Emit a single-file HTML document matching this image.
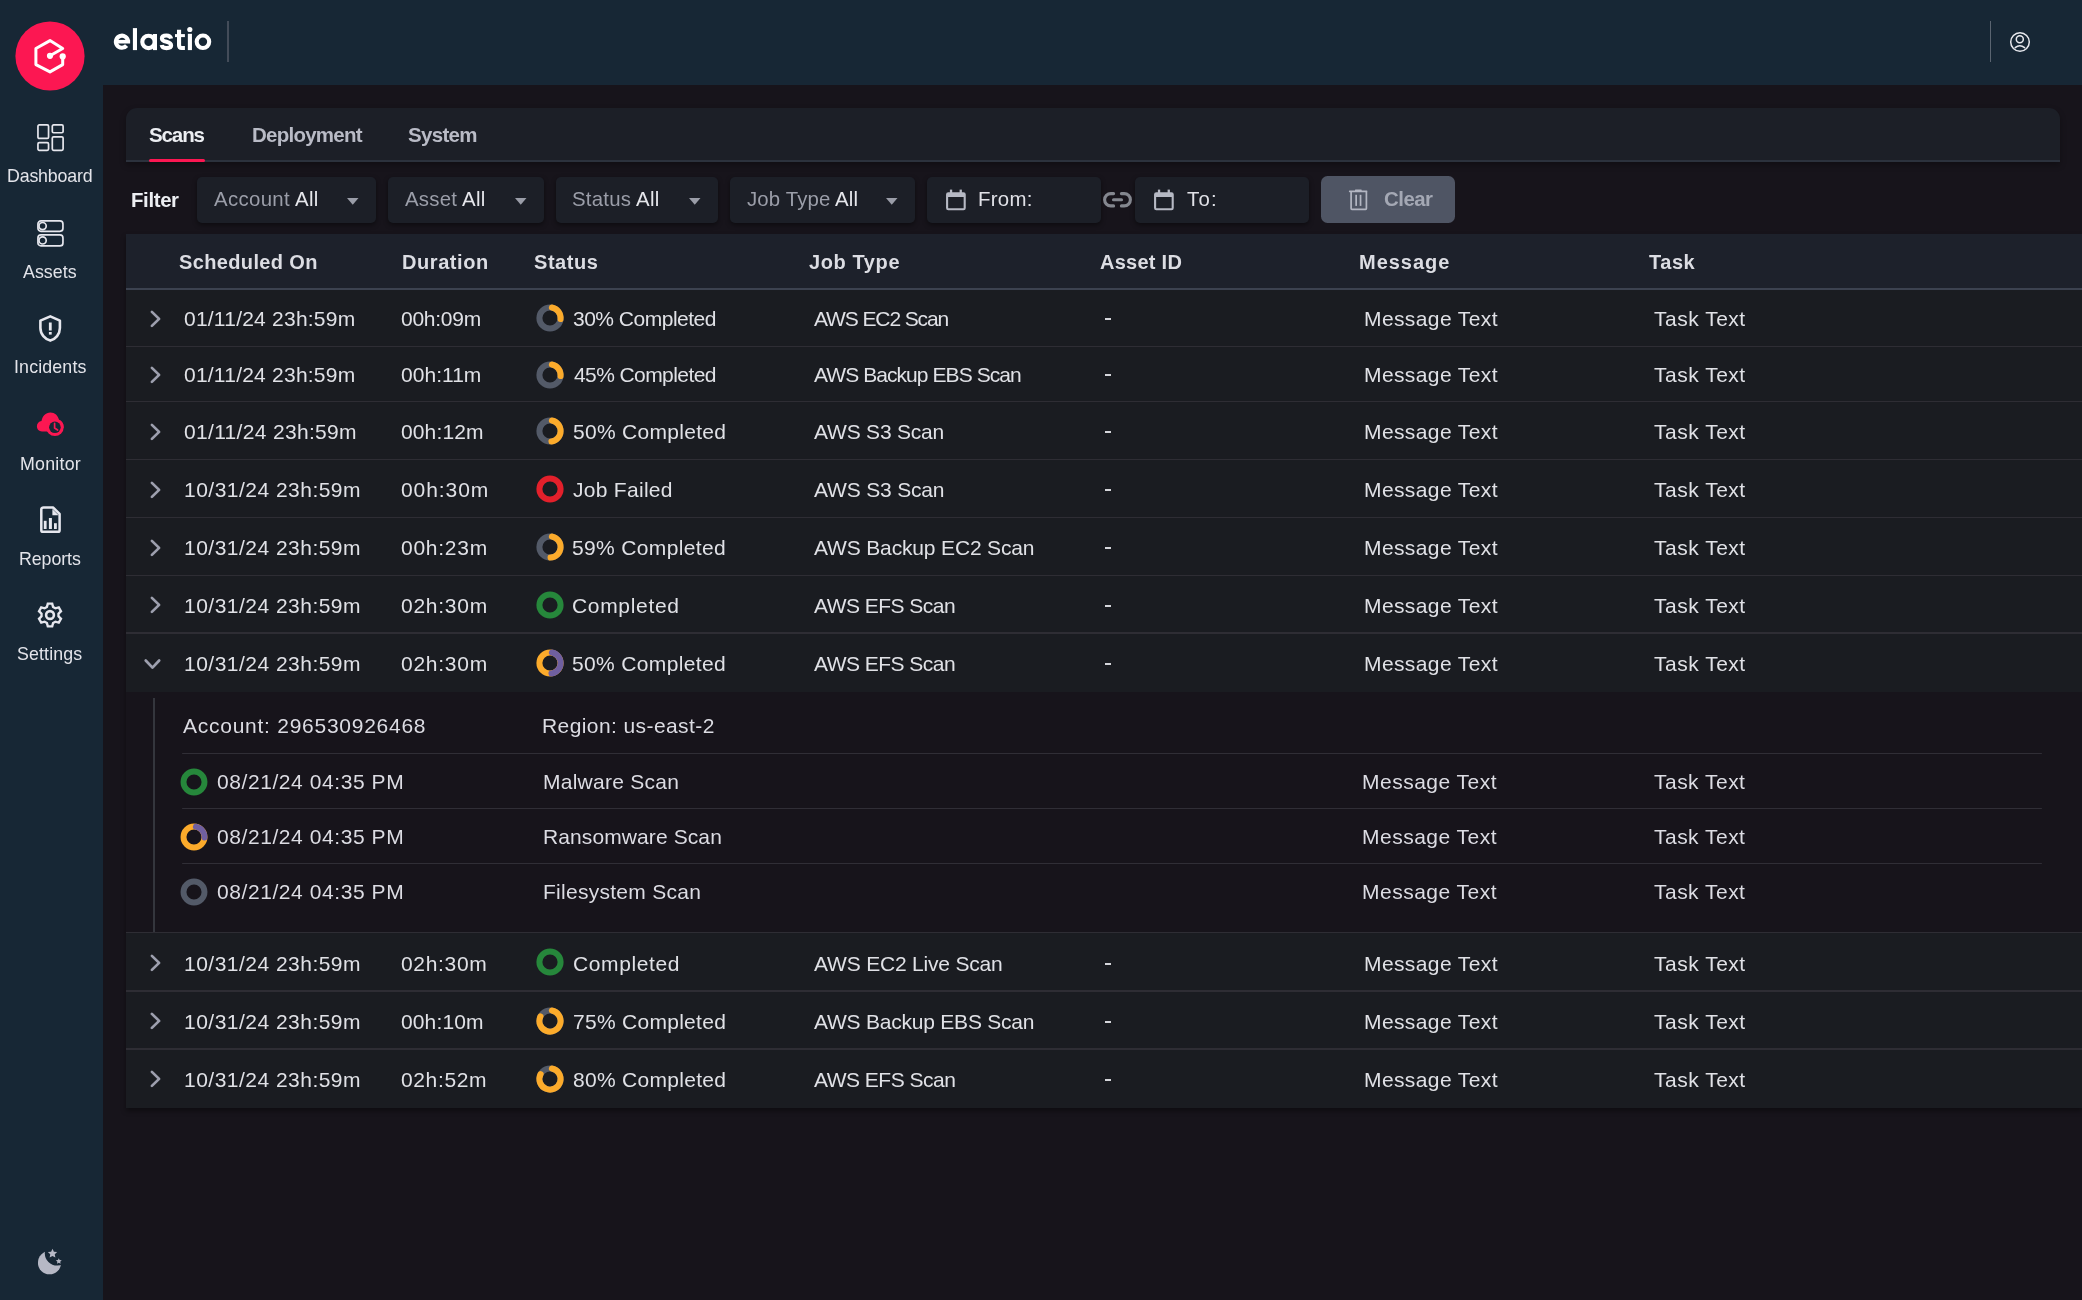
<!DOCTYPE html><html><head><meta charset="utf-8"><style>
*{box-sizing:border-box;margin:0;padding:0}
html,body{width:2082px;height:1300px;overflow:hidden;background:#17141b;font-family:"Liberation Sans",sans-serif}
.t{position:absolute;white-space:nowrap;will-change:transform}
.r{position:absolute}
svg{position:absolute;overflow:visible}
</style></head><body><div class="r" style="left:0px;top:0px;width:2082px;height:85px;background:#172735;"></div>
<div class="r" style="left:0px;top:0px;width:103px;height:1300px;background:#172735;"></div>
<svg style="left:15px;top:21px" width="70" height="70" viewBox="0 0 70 70"><circle cx="35" cy="35" r="34.6" fill="#fc1752"/><path d="M47.7 35.5 V43.6 L35 50.9 L20.9 43.6 V27.5 L35 19.6 L47.7 27.5 L35 34.7" fill="none" stroke="#fff" stroke-width="3" stroke-linejoin="round" stroke-linecap="round"/><circle cx="35" cy="34.8" r="3.1" fill="#fff"/><circle cx="47.7" cy="35.4" r="3.1" fill="#fff"/></svg>
<svg style="left:0;top:0" width="230" height="60" viewBox="0 0 230 60"><g fill="none" stroke="#fff" stroke-width="4.1"><path d="M128.0 41.7 A6.05 6.05 0 1 0 126.6 45.6"/><circle cx="148.5" cy="41.9" r="6.2"/><circle cx="202.95" cy="41.8" r="6.25"/><path d="M171.1 38.6 C170.6 36.4 168.8 35.5 166.5 35.5 C164 35.5 161.9 36.5 161.9 38.5 C161.9 40.7 164.3 41.3 166.6 41.8 C169.2 42.4 171.1 43.2 171.1 45.6 C171.1 47.5 169.1 48.1 166.5 48.1 C163.9 48.1 162 47.1 161.7 45.0"/><path d="M179.05 29.8 V45.3 Q179.05 48.05 181.8 48.05 H184.9"/></g><g fill="#fff"><rect x="117.5" y="39.9" width="12.6" height="3.6"/><rect x="132.9" y="28.1" width="4.1" height="22"/><rect x="152.9" y="34" width="4.1" height="16.1"/><rect x="175" y="34.1" width="9.9" height="3"/><rect x="187.85" y="33.8" width="4.1" height="16.3"/><circle cx="189.8" cy="29.5" r="2.6"/></g></svg>
<div class="r" style="left:227px;top:21.2px;width:2px;height:40.5px;background:#434c59;"></div>
<div class="r" style="left:1989.5px;top:21px;width:1.6px;height:41px;background:#5a6470;"></div>
<svg style="left:2008px;top:29.75px" width="24" height="24" viewBox="0 0 24 24" fill="none" stroke="#e8e9ee" stroke-width="1.5"><circle cx="12" cy="12" r="9.3"/><circle cx="11.8" cy="9.3" r="3.5"/><path d="M7.2 17.6 Q11.8 13.8 16.6 17.6" stroke-linecap="round"/></svg>
<div id="t0" class="t" style="left:7.00px;top:168.23px;font-size:17.8px;line-height:17.8px;font-weight:normal;color:#e3e4ea;letter-spacing:-0.175px;">Dashboard</div>
<div id="t1" class="t" style="left:23.00px;top:263.83px;font-size:17.8px;line-height:17.8px;font-weight:normal;color:#e3e4ea;letter-spacing:0.040px;">Assets</div>
<div id="t2" class="t" style="left:14.00px;top:359.43px;font-size:17.8px;line-height:17.8px;font-weight:normal;color:#e3e4ea;letter-spacing:0.150px;">Incidents</div>
<div id="t3" class="t" style="left:19.50px;top:455.93px;font-size:17.8px;line-height:17.8px;font-weight:normal;color:#e3e4ea;letter-spacing:0.233px;">Monitor</div>
<div id="t4" class="t" style="left:19.00px;top:550.93px;font-size:17.8px;line-height:17.8px;font-weight:normal;color:#e3e4ea;letter-spacing:-0.067px;">Reports</div>
<div id="t5" class="t" style="left:17.00px;top:646.23px;font-size:17.8px;line-height:17.8px;font-weight:normal;color:#e3e4ea;letter-spacing:0.143px;">Settings</div>
<svg style="left:37px;top:123.5px" width="27" height="27" viewBox="0 0 27 27" fill="none" stroke="#e6e7ee" stroke-width="1.7"><rect x="0.95" y="0.95" width="10.6" height="13.5" rx="1.3"/><rect x="15.3" y="0.95" width="10.8" height="7.8" rx="1.3"/><rect x="0.95" y="18.7" width="10.6" height="7.6" rx="1.3"/><rect x="15.3" y="12.8" width="10.8" height="13.5" rx="1.3"/></svg>
<svg style="left:37px;top:219.5px" width="27" height="27" viewBox="0 0 27 27" fill="none" stroke="#e6e7ee" stroke-width="1.7"><rect x="0.95" y="0.95" width="25" height="10.4" rx="3"/><rect x="0.95" y="14.9" width="25" height="11" rx="3"/><circle cx="5.6" cy="6.1" r="3.6"/><circle cx="5.6" cy="20.4" r="3.6"/></svg>
<svg style="left:39px;top:315px" width="23" height="27" viewBox="0 0 23 27"><path d="M11.3 1.4 L20.9 5.6 V13 C20.9 19.3 16.6 24 11.3 25.6 C6 24 1.4 19.3 1.4 13 V5.6 Z" fill="none" stroke="#e6e7ee" stroke-width="2.6" stroke-linejoin="round"/><rect x="9.9" y="7.5" width="2.8" height="8" fill="#e6e7ee"/><rect x="9.9" y="17" width="2.8" height="2.6" fill="#e6e7ee"/></svg>
<svg style="left:36px;top:411px" width="30" height="27" viewBox="0 0 30 27"><path d="M6 20.5 C3 20.5 0.9 18.2 0.9 15.3 C0.9 12.6 2.9 10.4 5.5 10.1 C6.2 5.2 9.6 1.4 14.4 1.4 C18.8 1.4 22.2 4.6 22.9 8.8 C25.6 9.6 27.6 12.2 27.6 15.2 C27.6 18.6 25 20.5 22 20.5 Z" fill="#fc1752"/><circle cx="18.9" cy="16.3" r="8.8" fill="#fc1752"/><circle cx="18.9" cy="16.3" r="5.8" fill="#172735"/><path d="M18.6 12.3 V17 L21.6 19" fill="none" stroke="#fc1752" stroke-width="1.7" stroke-linecap="round" stroke-linejoin="round"/></svg>
<svg style="left:40px;top:506px" width="22" height="28" viewBox="0 0 22 28"><path d="M3.6 1.5 H13 L19.6 7.8 V24.2 Q19.6 25.8 18 25.8 H3 Q1.3 25.8 1.3 24.2 V3.3 Q1.3 1.5 3.6 1.5 Z" fill="none" stroke="#e6e7ee" stroke-width="2.5" stroke-linejoin="round"/><path d="M12.4 3 V9.3 H18.6 Z" fill="#e6e7ee"/><rect x="3.8" y="14.8" width="2.8" height="8.2" fill="#e6e7ee"/><rect x="8.9" y="12" width="3" height="11" fill="#e6e7ee"/><rect x="14" y="17.2" width="2.8" height="5.8" fill="#e6e7ee"/></svg>
<svg style="left:37.3px;top:602.2px" width="26" height="26" viewBox="0 0 26 26"><path d="M9.90 4.98 L10.81 1.61 L15.19 1.61 L16.10 4.98 L18.40 6.30 L21.77 5.41 L23.96 9.20 L21.50 11.67 L21.50 14.33 L23.96 16.80 L21.77 20.59 L18.40 19.70 L16.10 21.02 L15.19 24.39 L10.81 24.39 L9.90 21.02 L7.60 19.70 L4.23 20.59 L2.04 16.80 L4.50 14.33 L4.50 11.67 L2.04 9.20 L4.23 5.41 L7.60 6.30 Z" fill="none" stroke="#e6e7ee" stroke-width="2.4" stroke-linejoin="miter"/><circle cx="13" cy="13" r="3.9" fill="none" stroke="#e6e7ee" stroke-width="2.6"/></svg>
<svg style="left:38px;top:1248px" width="26" height="28" viewBox="0 0 26 28"><defs><mask id="mm"><rect x="0" y="0" width="26" height="28" fill="#fff"/><circle cx="19.2" cy="5.2" r="12.4" fill="#000"/></mask></defs><circle cx="11.5" cy="14.7" r="11.6" fill="#b6b8c5" mask="url(#mm)"/><path d="M14.50 0.70 L15.88 3.70 L19.16 4.09 L16.74 6.33 L17.38 9.56 L14.50 7.95 L11.62 9.56 L12.26 6.33 L9.84 4.09 L13.12 3.70 Z" fill="#b6b8c5"/><path d="M20.80 10.20 L21.67 12.10 L23.75 12.34 L22.22 13.76 L22.62 15.81 L20.80 14.79 L18.98 15.81 L19.38 13.76 L17.85 12.34 L19.93 12.10 Z" fill="#b6b8c5"/></svg>
<div class="r" style="left:126px;top:108px;width:1934px;height:54px;background:#1c1f27;border-radius:11px 11px 0 0;box-shadow:0 3px 6px rgba(0,0,0,.3)"></div>
<div class="r" style="left:126px;top:160.2px;width:1934px;height:1.9px;background:#2c323d;"></div>
<div id="t6" class="t" style="left:149.00px;top:124.55px;font-size:20.5px;line-height:20.5px;font-weight:bold;color:#eceef2;letter-spacing:-1.100px;">Scans</div>
<div id="t7" class="t" style="left:251.50px;top:124.55px;font-size:20.5px;line-height:20.5px;font-weight:bold;color:#b9bbc6;letter-spacing:-0.756px;">Deployment</div>
<div id="t8" class="t" style="left:408.00px;top:124.55px;font-size:20.5px;line-height:20.5px;font-weight:bold;color:#b9bbc6;letter-spacing:-0.680px;">System</div>
<div class="r" style="left:148.8px;top:158.8px;width:56.4px;height:3.2px;background:#fc1752;border-radius:2px"></div>
<div id="t9" class="t" style="left:131.00px;top:189.53px;font-size:20.4px;line-height:20.4px;font-weight:bold;color:#eceef2;letter-spacing:-0.360px;">Filter</div>
<div class="r" style="left:197px;top:176.5px;width:179px;height:46px;background:#1c1f27;border-radius:5px;box-shadow:0 2px 5px rgba(0,0,0,.45)"></div>
<div id="t10" class="t" style="left:213.50px;top:188.73px;font-size:20.4px;line-height:20.4px;font-weight:normal;color:#9b9ea9;letter-spacing:0.340px;">Account <span style="color:#e6e7ec">All</span></div>
<svg style="left:347px;top:197.6px" width="12" height="7" viewBox="0 0 12 7"><path d="M0 0 H11.5 L5.75 6.8 Z" fill="#9a9da8"/></svg>
<div class="r" style="left:388px;top:176.5px;width:156px;height:46px;background:#1c1f27;border-radius:5px;box-shadow:0 2px 5px rgba(0,0,0,.45)"></div>
<div id="t11" class="t" style="left:405.00px;top:188.73px;font-size:20.4px;line-height:20.4px;font-weight:normal;color:#9b9ea9;letter-spacing:0.250px;">Asset <span style="color:#e6e7ec">All</span></div>
<svg style="left:515px;top:197.6px" width="12" height="7" viewBox="0 0 12 7"><path d="M0 0 H11.5 L5.75 6.8 Z" fill="#9a9da8"/></svg>
<div class="r" style="left:556px;top:176.5px;width:162px;height:46px;background:#1c1f27;border-radius:5px;box-shadow:0 2px 5px rgba(0,0,0,.45)"></div>
<div id="t12" class="t" style="left:571.50px;top:188.73px;font-size:20.4px;line-height:20.4px;font-weight:normal;color:#9b9ea9;letter-spacing:0.244px;">Status <span style="color:#e6e7ec">All</span></div>
<svg style="left:689.3px;top:197.6px" width="12" height="7" viewBox="0 0 12 7"><path d="M0 0 H11.5 L5.75 6.8 Z" fill="#9a9da8"/></svg>
<div class="r" style="left:730px;top:176.5px;width:185px;height:46px;background:#1c1f27;border-radius:5px;box-shadow:0 2px 5px rgba(0,0,0,.45)"></div>
<div id="t13" class="t" style="left:746.50px;top:188.73px;font-size:20.4px;line-height:20.4px;font-weight:normal;color:#9b9ea9;letter-spacing:0.127px;">Job Type <span style="color:#e6e7ec">All</span></div>
<svg style="left:886.4px;top:197.6px" width="12" height="7" viewBox="0 0 12 7"><path d="M0 0 H11.5 L5.75 6.8 Z" fill="#9a9da8"/></svg>
<div class="r" style="left:927px;top:176.5px;width:174px;height:46px;background:#1c1f27;border-radius:5px;box-shadow:0 2px 5px rgba(0,0,0,.45)"></div>
<svg style="left:946px;top:188.8px" width="20" height="22" viewBox="0 0 20 22"><rect x="1.1" y="4.4" width="17.6" height="15.9" rx="1.2" fill="none" stroke="#b6b9c4" stroke-width="2.1"/><rect x="1.1" y="4.4" width="17.6" height="3.6" fill="#b6b9c4"/><rect x="3.9" y="0.6" width="2.3" height="4" fill="#b6b9c4"/><rect x="13.6" y="0.6" width="2.3" height="4" fill="#b6b9c4"/></svg>
<div id="t14" class="t" style="left:977.50px;top:188.73px;font-size:20.4px;line-height:20.4px;font-weight:normal;color:#e0e1e7;letter-spacing:0.300px;">From:</div>
<div class="r" style="left:1135px;top:176.5px;width:174px;height:46px;background:#1c1f27;border-radius:5px;box-shadow:0 2px 5px rgba(0,0,0,.45)"></div>
<svg style="left:1154.2px;top:188.8px" width="20" height="22" viewBox="0 0 20 22"><rect x="1.1" y="4.4" width="17.6" height="15.9" rx="1.2" fill="none" stroke="#b6b9c4" stroke-width="2.1"/><rect x="1.1" y="4.4" width="17.6" height="3.6" fill="#b6b9c4"/><rect x="3.9" y="0.6" width="2.3" height="4" fill="#b6b9c4"/><rect x="13.6" y="0.6" width="2.3" height="4" fill="#b6b9c4"/></svg>
<div id="t15" class="t" style="left:1187.00px;top:188.73px;font-size:20.4px;line-height:20.4px;font-weight:normal;color:#e0e1e7;letter-spacing:1.200px;">To:</div>
<svg style="left:1103px;top:192px" width="30" height="16" viewBox="0 0 30 16" fill="none" stroke="#84878f" stroke-width="3.1" stroke-linecap="round"><path d="M10.6 1.6 H7.75 A6.15 6.15 0 0 0 7.75 13.9 H10.6"/><path d="M18.4 1.6 H21.25 A6.15 6.15 0 0 1 21.25 13.9 H18.4"/><path d="M10.5 7.75 H18.5"/></svg>
<div class="r" style="left:1321px;top:176px;width:134.3px;height:46.7px;background:#4f5564;border-radius:6.5px"></div>
<svg style="left:1348px;top:188px" width="22" height="24" viewBox="0 0 22 24"><g fill="#b3b6c2"><rect x="7" y="1.4" width="6.7" height="1.8" rx="0.5"/><rect x="0.9" y="2.6" width="18.5" height="1.6" rx="0.6"/><rect x="7.3" y="6.8" width="1.7" height="11.1"/><rect x="11.7" y="6.8" width="1.7" height="11.1"/></g><path d="M3.1 4 V20.6 Q3.1 21.3 3.9 21.3 H17.6 Q18.4 21.3 18.4 20.6 V4" fill="none" stroke="#b3b6c2" stroke-width="1.7"/></svg>
<div id="t16" class="t" style="left:1383.50px;top:188.73px;font-size:20.4px;line-height:20.4px;font-weight:bold;color:#a4a8b4;letter-spacing:-0.500px;">Clear</div>
<div class="r" style="left:126px;top:234px;width:1956px;height:874px;background:#1a1c21;box-shadow:0 3px 5px rgba(0,0,0,.4)"></div>
<div class="r" style="left:126px;top:234px;width:1956px;height:54.6px;background:#1d212b;"></div>
<div class="r" style="left:126px;top:287.6px;width:1956px;height:2px;background:#3c4250;"></div>
<div id="t17" class="t" style="left:178.50px;top:251.87px;font-size:20px;line-height:20px;font-weight:bold;color:#dcdde3;letter-spacing:0.364px;">Scheduled On</div>
<div id="t18" class="t" style="left:402.00px;top:251.87px;font-size:20px;line-height:20px;font-weight:bold;color:#dcdde3;letter-spacing:0.571px;">Duration</div>
<div id="t19" class="t" style="left:533.50px;top:251.87px;font-size:20px;line-height:20px;font-weight:bold;color:#dcdde3;letter-spacing:0.560px;">Status</div>
<div id="t20" class="t" style="left:809.00px;top:251.87px;font-size:20px;line-height:20px;font-weight:bold;color:#dcdde3;letter-spacing:0.600px;">Job Type</div>
<div id="t21" class="t" style="left:1099.50px;top:251.87px;font-size:20px;line-height:20px;font-weight:bold;color:#dcdde3;letter-spacing:0.257px;">Asset ID</div>
<div id="t22" class="t" style="left:1359.00px;top:251.87px;font-size:20px;line-height:20px;font-weight:bold;color:#dcdde3;letter-spacing:0.967px;">Message</div>
<div id="t23" class="t" style="left:1649.00px;top:251.87px;font-size:20px;line-height:20px;font-weight:bold;color:#dcdde3;letter-spacing:0.533px;">Task</div>
<div class="r" style="left:126px;top:345.8px;width:1956px;height:1.7px;background:#2e2d34;"></div>
<svg style="left:148px;top:308.65px" width="14" height="20" viewBox="0 0 14 20"><path d="M3.9 2.9 L11.1 9.9 L3.9 16.9" fill="none" stroke="#9d9fae" stroke-width="2.7" stroke-linecap="round" stroke-linejoin="round"/></svg>
<div id="t24" class="t" style="left:184.00px;top:307.92px;font-size:21px;line-height:21px;font-weight:normal;color:#e0e1e6;letter-spacing:0.227px;">01/11/24 23h:59m</div>
<div id="t25" class="t" style="left:401.00px;top:307.92px;font-size:21px;line-height:21px;font-weight:normal;color:#e0e1e6;letter-spacing:-0.267px;">00h:09m</div>
<svg style="left:535.30px;top:303.35px" width="30" height="30" viewBox="0 0 30 30"><circle cx="15" cy="15" r="10.6" fill="none" stroke="#535a68" stroke-width="6.0"/><path d="M16.841 4.561 A10.6 10.6 0 0 1 25.542 16.108" fill="none" stroke="#fcab2b" stroke-width="6.0" stroke-linecap="round"/></svg>
<div id="t26" class="t" style="left:572.50px;top:307.92px;font-size:21px;line-height:21px;font-weight:normal;color:#e0e1e6;letter-spacing:-0.500px;">30% Completed</div>
<div id="t27" class="t" style="left:813.50px;top:307.92px;font-size:21px;line-height:21px;font-weight:normal;color:#e0e1e6;letter-spacing:-1.109px;">AWS EC2 Scan</div>
<div class="r" style="left:1104.8px;top:317.9px;width:6.5px;height:2.1px;background:#d5d6db;"></div>
<div id="t28" class="t" style="left:1364.00px;top:307.92px;font-size:21px;line-height:21px;font-weight:normal;color:#e0e1e6;letter-spacing:0.400px;">Message Text</div>
<div id="t29" class="t" style="left:1654.00px;top:307.92px;font-size:21px;line-height:21px;font-weight:normal;color:#e0e1e6;letter-spacing:0.500px;">Task Text</div>
<div class="r" style="left:126px;top:400.6px;width:1956px;height:1.7px;background:#2e2d34;"></div>
<svg style="left:148px;top:365.1px" width="14" height="20" viewBox="0 0 14 20"><path d="M3.9 2.9 L11.1 9.9 L3.9 16.9" fill="none" stroke="#9d9fae" stroke-width="2.7" stroke-linecap="round" stroke-linejoin="round"/></svg>
<div id="t30" class="t" style="left:184.00px;top:364.02px;font-size:21px;line-height:21px;font-weight:normal;color:#e0e1e6;letter-spacing:0.227px;">01/11/24 23h:59m</div>
<div id="t31" class="t" style="left:401.00px;top:364.02px;font-size:21px;line-height:21px;font-weight:normal;color:#e0e1e6;letter-spacing:0.033px;">00h:11m</div>
<svg style="left:535.30px;top:359.80px" width="30" height="30" viewBox="0 0 30 30"><circle cx="15" cy="15" r="10.6" fill="none" stroke="#535a68" stroke-width="6.0"/><path d="M16.841 4.561 A10.6 10.6 0 0 1 25.542 16.108" fill="none" stroke="#fcab2b" stroke-width="6.0" stroke-linecap="round"/></svg>
<div id="t32" class="t" style="left:573.50px;top:364.02px;font-size:21px;line-height:21px;font-weight:normal;color:#e0e1e6;letter-spacing:-0.583px;">45% Completed</div>
<div id="t33" class="t" style="left:814.00px;top:364.02px;font-size:21px;line-height:21px;font-weight:normal;color:#e0e1e6;letter-spacing:-0.933px;">AWS Backup EBS Scan</div>
<div class="r" style="left:1104.8px;top:374.0px;width:6.5px;height:2.1px;background:#d5d6db;"></div>
<div id="t34" class="t" style="left:1364.00px;top:364.02px;font-size:21px;line-height:21px;font-weight:normal;color:#e0e1e6;letter-spacing:0.400px;">Message Text</div>
<div id="t35" class="t" style="left:1654.00px;top:364.02px;font-size:21px;line-height:21px;font-weight:normal;color:#e0e1e6;letter-spacing:0.500px;">Task Text</div>
<div class="r" style="left:126px;top:458.6px;width:1956px;height:1.7px;background:#2e2d34;"></div>
<svg style="left:148px;top:421.5px" width="14" height="20" viewBox="0 0 14 20"><path d="M3.9 2.9 L11.1 9.9 L3.9 16.9" fill="none" stroke="#9d9fae" stroke-width="2.7" stroke-linecap="round" stroke-linejoin="round"/></svg>
<div id="t36" class="t" style="left:184.00px;top:420.82px;font-size:21px;line-height:21px;font-weight:normal;color:#e0e1e6;letter-spacing:0.320px;">01/11/24 23h:59m</div>
<div id="t37" class="t" style="left:401.00px;top:420.82px;font-size:21px;line-height:21px;font-weight:normal;color:#e0e1e6;letter-spacing:0.133px;">00h:12m</div>
<svg style="left:535.30px;top:416.20px" width="30" height="30" viewBox="0 0 30 30"><circle cx="15" cy="15" r="10.6" fill="none" stroke="#535a68" stroke-width="6.0"/><path d="M16.841 4.561 A10.6 10.6 0 0 1 16.475 25.497" fill="none" stroke="#fcab2b" stroke-width="6.0" stroke-linecap="round"/></svg>
<div id="t38" class="t" style="left:573.00px;top:420.82px;font-size:21px;line-height:21px;font-weight:normal;color:#e0e1e6;letter-spacing:0.300px;">50% Completed</div>
<div id="t39" class="t" style="left:813.50px;top:420.82px;font-size:21px;line-height:21px;font-weight:normal;color:#e0e1e6;letter-spacing:-0.200px;">AWS S3 Scan</div>
<div class="r" style="left:1104.8px;top:430.8px;width:6.5px;height:2.1px;background:#d5d6db;"></div>
<div id="t40" class="t" style="left:1364.00px;top:420.82px;font-size:21px;line-height:21px;font-weight:normal;color:#e0e1e6;letter-spacing:0.400px;">Message Text</div>
<div id="t41" class="t" style="left:1654.00px;top:420.82px;font-size:21px;line-height:21px;font-weight:normal;color:#e0e1e6;letter-spacing:0.500px;">Task Text</div>
<div class="r" style="left:126px;top:516.8px;width:1956px;height:1.7px;background:#2e2d34;"></div>
<svg style="left:148px;top:479.6px" width="14" height="20" viewBox="0 0 14 20"><path d="M3.9 2.9 L11.1 9.9 L3.9 16.9" fill="none" stroke="#9d9fae" stroke-width="2.7" stroke-linecap="round" stroke-linejoin="round"/></svg>
<div id="t42" class="t" style="left:183.50px;top:478.92px;font-size:21px;line-height:21px;font-weight:normal;color:#e0e1e6;letter-spacing:0.480px;">10/31/24 23h:59m</div>
<div id="t43" class="t" style="left:400.50px;top:478.92px;font-size:21px;line-height:21px;font-weight:normal;color:#e0e1e6;letter-spacing:0.933px;">00h:30m</div>
<svg style="left:535.30px;top:474.30px" width="30" height="30" viewBox="0 0 30 30"><circle cx="15" cy="15" r="10.6" fill="none" stroke="#e3202b" stroke-width="6.0"/></svg>
<div id="t44" class="t" style="left:573.00px;top:478.92px;font-size:21px;line-height:21px;font-weight:normal;color:#e0e1e6;letter-spacing:0.289px;">Job Failed</div>
<div id="t45" class="t" style="left:814.00px;top:478.92px;font-size:21px;line-height:21px;font-weight:normal;color:#e0e1e6;letter-spacing:-0.180px;">AWS S3 Scan</div>
<div class="r" style="left:1104.8px;top:488.9px;width:6.5px;height:2.1px;background:#d5d6db;"></div>
<div id="t46" class="t" style="left:1364.00px;top:478.92px;font-size:21px;line-height:21px;font-weight:normal;color:#e0e1e6;letter-spacing:0.400px;">Message Text</div>
<div id="t47" class="t" style="left:1654.00px;top:478.92px;font-size:21px;line-height:21px;font-weight:normal;color:#e0e1e6;letter-spacing:0.500px;">Task Text</div>
<div class="r" style="left:126px;top:574.5px;width:1956px;height:1.7px;background:#2e2d34;"></div>
<svg style="left:148px;top:537.55px" width="14" height="20" viewBox="0 0 14 20"><path d="M3.9 2.9 L11.1 9.9 L3.9 16.9" fill="none" stroke="#9d9fae" stroke-width="2.7" stroke-linecap="round" stroke-linejoin="round"/></svg>
<div id="t48" class="t" style="left:183.50px;top:537.22px;font-size:21px;line-height:21px;font-weight:normal;color:#e0e1e6;letter-spacing:0.480px;">10/31/24 23h:59m</div>
<div id="t49" class="t" style="left:400.50px;top:537.22px;font-size:21px;line-height:21px;font-weight:normal;color:#e0e1e6;letter-spacing:0.733px;">00h:23m</div>
<svg style="left:535.30px;top:532.25px" width="30" height="30" viewBox="0 0 30 30"><circle cx="15" cy="15" r="10.6" fill="none" stroke="#535a68" stroke-width="6.0"/><path d="M16.841 4.561 A10.6 10.6 0 0 1 15.555 25.585" fill="none" stroke="#fcab2b" stroke-width="6.0" stroke-linecap="round"/></svg>
<div id="t50" class="t" style="left:572.00px;top:537.22px;font-size:21px;line-height:21px;font-weight:normal;color:#e0e1e6;letter-spacing:0.350px;">59% Completed</div>
<div id="t51" class="t" style="left:814.00px;top:537.22px;font-size:21px;line-height:21px;font-weight:normal;color:#e0e1e6;letter-spacing:-0.156px;">AWS Backup EC2 Scan</div>
<div class="r" style="left:1104.8px;top:547.2px;width:6.5px;height:2.1px;background:#d5d6db;"></div>
<div id="t52" class="t" style="left:1364.00px;top:537.22px;font-size:21px;line-height:21px;font-weight:normal;color:#e0e1e6;letter-spacing:0.400px;">Message Text</div>
<div id="t53" class="t" style="left:1654.00px;top:537.22px;font-size:21px;line-height:21px;font-weight:normal;color:#e0e1e6;letter-spacing:0.500px;">Task Text</div>
<div class="r" style="left:126px;top:632.3px;width:1956px;height:1.7px;background:#2e2d34;"></div>
<svg style="left:148px;top:595.3px" width="14" height="20" viewBox="0 0 14 20"><path d="M3.9 2.9 L11.1 9.9 L3.9 16.9" fill="none" stroke="#9d9fae" stroke-width="2.7" stroke-linecap="round" stroke-linejoin="round"/></svg>
<div id="t54" class="t" style="left:183.50px;top:594.92px;font-size:21px;line-height:21px;font-weight:normal;color:#e0e1e6;letter-spacing:0.480px;">10/31/24 23h:59m</div>
<div id="t55" class="t" style="left:400.50px;top:594.92px;font-size:21px;line-height:21px;font-weight:normal;color:#e0e1e6;letter-spacing:0.733px;">02h:30m</div>
<svg style="left:535.30px;top:590.00px" width="30" height="30" viewBox="0 0 30 30"><circle cx="15" cy="15" r="10.6" fill="none" stroke="#26873b" stroke-width="6.0"/></svg>
<div id="t56" class="t" style="left:572.00px;top:594.92px;font-size:21px;line-height:21px;font-weight:normal;color:#e0e1e6;letter-spacing:0.675px;">Completed</div>
<div id="t57" class="t" style="left:814.00px;top:594.92px;font-size:21px;line-height:21px;font-weight:normal;color:#e0e1e6;letter-spacing:-0.527px;">AWS EFS Scan</div>
<div class="r" style="left:1104.8px;top:604.9px;width:6.5px;height:2.1px;background:#d5d6db;"></div>
<div id="t58" class="t" style="left:1364.00px;top:594.92px;font-size:21px;line-height:21px;font-weight:normal;color:#e0e1e6;letter-spacing:0.400px;">Message Text</div>
<div id="t59" class="t" style="left:1654.00px;top:594.92px;font-size:21px;line-height:21px;font-weight:normal;color:#e0e1e6;letter-spacing:0.500px;">Task Text</div>
<svg style="left:143px;top:654.6px" width="20" height="16" viewBox="0 0 20 16"><path d="M2.7 5.5 L9.5 12.6 L16.2 5.5" fill="none" stroke="#9d9fae" stroke-width="2.7" stroke-linecap="round" stroke-linejoin="round"/></svg>
<div id="t60" class="t" style="left:183.50px;top:652.62px;font-size:21px;line-height:21px;font-weight:normal;color:#e0e1e6;letter-spacing:0.480px;">10/31/24 23h:59m</div>
<div id="t61" class="t" style="left:400.50px;top:652.62px;font-size:21px;line-height:21px;font-weight:normal;color:#e0e1e6;letter-spacing:0.733px;">02h:30m</div>
<svg style="left:535.30px;top:648.30px" width="30" height="30" viewBox="0 0 30 30"><circle cx="15" cy="15" r="10.6" fill="none" stroke="#fcab2b" stroke-width="6.0"/><path d="M16.841 4.561 A10.6 10.6 0 0 1 16.475 25.497" fill="none" stroke="#6f5fa0" stroke-width="6.0" stroke-linecap="round"/></svg>
<div id="t62" class="t" style="left:572.00px;top:652.62px;font-size:21px;line-height:21px;font-weight:normal;color:#e0e1e6;letter-spacing:0.350px;">50% Completed</div>
<div id="t63" class="t" style="left:814.00px;top:652.62px;font-size:21px;line-height:21px;font-weight:normal;color:#e0e1e6;letter-spacing:-0.527px;">AWS EFS Scan</div>
<div class="r" style="left:1104.8px;top:662.6px;width:6.5px;height:2.1px;background:#d5d6db;"></div>
<div id="t64" class="t" style="left:1364.00px;top:652.62px;font-size:21px;line-height:21px;font-weight:normal;color:#e0e1e6;letter-spacing:0.400px;">Message Text</div>
<div id="t65" class="t" style="left:1654.00px;top:652.62px;font-size:21px;line-height:21px;font-weight:normal;color:#e0e1e6;letter-spacing:0.500px;">Task Text</div>
<div class="r" style="left:126px;top:692px;width:1956px;height:240.5px;background:#17141b;"></div>
<div class="r" style="left:153px;top:698px;width:1.8px;height:235px;background:#34363d;"></div>
<div id="t66" class="t" style="left:182.50px;top:715.02px;font-size:21px;line-height:21px;font-weight:normal;color:#dcdce3;letter-spacing:0.740px;">Account: 296530926468</div>
<div id="t67" class="t" style="left:541.50px;top:715.02px;font-size:21px;line-height:21px;font-weight:normal;color:#dcdce3;letter-spacing:0.413px;">Region: us-east-2</div>
<div class="r" style="left:182px;top:752.8px;width:1860px;height:1.4px;background:#302e36;border-radius:1px"></div>
<div class="r" style="left:182px;top:807.6999999999999px;width:1860px;height:1.4px;background:#302e36;border-radius:1px"></div>
<div class="r" style="left:182px;top:862.5999999999999px;width:1860px;height:1.4px;background:#302e36;border-radius:1px"></div>
<svg style="left:178.80px;top:767.20px" width="30" height="30" viewBox="0 0 30 30"><circle cx="15" cy="15" r="10.5" fill="none" stroke="#26873b" stroke-width="5.9"/></svg>
<div id="t68" class="t" style="left:216.50px;top:771.02px;font-size:21px;line-height:21px;font-weight:normal;color:#dcdce3;letter-spacing:0.575px;">08/21/24 04:35 PM</div>
<div id="t69" class="t" style="left:543.00px;top:771.02px;font-size:21px;line-height:21px;font-weight:normal;color:#dcdce3;letter-spacing:0.255px;">Malware Scan</div>
<div id="t70" class="t" style="left:1361.50px;top:771.02px;font-size:21px;line-height:21px;font-weight:normal;color:#dcdce3;letter-spacing:0.491px;">Message Text</div>
<div id="t71" class="t" style="left:1654.00px;top:771.02px;font-size:21px;line-height:21px;font-weight:normal;color:#dcdce3;letter-spacing:0.475px;">Task Text</div>
<svg style="left:178.80px;top:822.10px" width="30" height="30" viewBox="0 0 30 30"><circle cx="15" cy="15" r="10.5" fill="none" stroke="#fcab2b" stroke-width="5.9"/><path d="M16.823 4.660 A10.5 10.5 0 0 1 25.486 15.550" fill="none" stroke="#6f5fa0" stroke-width="5.9" stroke-linecap="round"/></svg>
<div id="t72" class="t" style="left:216.50px;top:826.32px;font-size:21px;line-height:21px;font-weight:normal;color:#dcdce3;letter-spacing:0.575px;">08/21/24 04:35 PM</div>
<div id="t73" class="t" style="left:543.00px;top:826.32px;font-size:21px;line-height:21px;font-weight:normal;color:#dcdce3;letter-spacing:0.100px;">Ransomware Scan</div>
<div id="t74" class="t" style="left:1361.50px;top:826.32px;font-size:21px;line-height:21px;font-weight:normal;color:#dcdce3;letter-spacing:0.491px;">Message Text</div>
<div id="t75" class="t" style="left:1654.00px;top:826.32px;font-size:21px;line-height:21px;font-weight:normal;color:#dcdce3;letter-spacing:0.475px;">Task Text</div>
<svg style="left:178.80px;top:877.30px" width="30" height="30" viewBox="0 0 30 30"><circle cx="15" cy="15" r="10.5" fill="none" stroke="#535a68" stroke-width="5.9"/></svg>
<div id="t76" class="t" style="left:216.50px;top:881.02px;font-size:21px;line-height:21px;font-weight:normal;color:#dcdce3;letter-spacing:0.575px;">08/21/24 04:35 PM</div>
<div id="t77" class="t" style="left:543.00px;top:881.02px;font-size:21px;line-height:21px;font-weight:normal;color:#dcdce3;letter-spacing:0.271px;">Filesystem Scan</div>
<div id="t78" class="t" style="left:1361.50px;top:881.02px;font-size:21px;line-height:21px;font-weight:normal;color:#dcdce3;letter-spacing:0.491px;">Message Text</div>
<div id="t79" class="t" style="left:1654.00px;top:881.02px;font-size:21px;line-height:21px;font-weight:normal;color:#dcdce3;letter-spacing:0.475px;">Task Text</div>
<div class="r" style="left:126px;top:931.6px;width:1956px;height:1.7px;background:#2e2d34;"></div>
<div class="r" style="left:126px;top:989.9px;width:1956px;height:1.7px;background:#2e2d34;"></div>
<svg style="left:148px;top:952.65px" width="14" height="20" viewBox="0 0 14 20"><path d="M3.9 2.9 L11.1 9.9 L3.9 16.9" fill="none" stroke="#9d9fae" stroke-width="2.7" stroke-linecap="round" stroke-linejoin="round"/></svg>
<div id="t80" class="t" style="left:183.50px;top:952.82px;font-size:21px;line-height:21px;font-weight:normal;color:#e0e1e6;letter-spacing:0.480px;">10/31/24 23h:59m</div>
<div id="t81" class="t" style="left:401.00px;top:952.82px;font-size:21px;line-height:21px;font-weight:normal;color:#e0e1e6;letter-spacing:0.667px;">02h:30m</div>
<svg style="left:535.30px;top:947.35px" width="30" height="30" viewBox="0 0 30 30"><circle cx="15" cy="15" r="10.6" fill="none" stroke="#26873b" stroke-width="6.0"/></svg>
<div id="t82" class="t" style="left:572.50px;top:952.82px;font-size:21px;line-height:21px;font-weight:normal;color:#e0e1e6;letter-spacing:0.600px;">Completed</div>
<div id="t83" class="t" style="left:813.50px;top:952.82px;font-size:21px;line-height:21px;font-weight:normal;color:#e0e1e6;letter-spacing:-0.188px;">AWS EC2 Live Scan</div>
<div class="r" style="left:1104.8px;top:962.8px;width:6.5px;height:2.1px;background:#d5d6db;"></div>
<div id="t84" class="t" style="left:1364.00px;top:952.82px;font-size:21px;line-height:21px;font-weight:normal;color:#e0e1e6;letter-spacing:0.400px;">Message Text</div>
<div id="t85" class="t" style="left:1654.00px;top:952.82px;font-size:21px;line-height:21px;font-weight:normal;color:#e0e1e6;letter-spacing:0.500px;">Task Text</div>
<div class="r" style="left:126px;top:1048.0px;width:1956px;height:1.7px;background:#2e2d34;"></div>
<svg style="left:148px;top:1010.85px" width="14" height="20" viewBox="0 0 14 20"><path d="M3.9 2.9 L11.1 9.9 L3.9 16.9" fill="none" stroke="#9d9fae" stroke-width="2.7" stroke-linecap="round" stroke-linejoin="round"/></svg>
<div id="t86" class="t" style="left:183.50px;top:1010.52px;font-size:21px;line-height:21px;font-weight:normal;color:#e0e1e6;letter-spacing:0.480px;">10/31/24 23h:59m</div>
<div id="t87" class="t" style="left:401.00px;top:1010.52px;font-size:21px;line-height:21px;font-weight:normal;color:#e0e1e6;letter-spacing:0.133px;">00h:10m</div>
<svg style="left:535.30px;top:1005.55px" width="30" height="30" viewBox="0 0 30 30"><circle cx="15" cy="15" r="10.6" fill="none" stroke="#535a68" stroke-width="6.0"/><path d="M16.841 4.561 A10.6 10.6 0 1 1 5.473 10.353" fill="none" stroke="#fcab2b" stroke-width="6.0" stroke-linecap="round"/></svg>
<div id="t88" class="t" style="left:572.50px;top:1010.52px;font-size:21px;line-height:21px;font-weight:normal;color:#e0e1e6;letter-spacing:0.283px;">75% Completed</div>
<div id="t89" class="t" style="left:813.50px;top:1010.52px;font-size:21px;line-height:21px;font-weight:normal;color:#e0e1e6;letter-spacing:-0.222px;">AWS Backup EBS Scan</div>
<div class="r" style="left:1104.8px;top:1020.5px;width:6.5px;height:2.1px;background:#d5d6db;"></div>
<div id="t90" class="t" style="left:1364.00px;top:1010.52px;font-size:21px;line-height:21px;font-weight:normal;color:#e0e1e6;letter-spacing:0.400px;">Message Text</div>
<div id="t91" class="t" style="left:1654.00px;top:1010.52px;font-size:21px;line-height:21px;font-weight:normal;color:#e0e1e6;letter-spacing:0.500px;">Task Text</div>
<svg style="left:148px;top:1069.15px" width="14" height="20" viewBox="0 0 14 20"><path d="M3.9 2.9 L11.1 9.9 L3.9 16.9" fill="none" stroke="#9d9fae" stroke-width="2.7" stroke-linecap="round" stroke-linejoin="round"/></svg>
<div id="t92" class="t" style="left:183.50px;top:1068.52px;font-size:21px;line-height:21px;font-weight:normal;color:#e0e1e6;letter-spacing:0.480px;">10/31/24 23h:59m</div>
<div id="t93" class="t" style="left:401.00px;top:1068.52px;font-size:21px;line-height:21px;font-weight:normal;color:#e0e1e6;letter-spacing:0.633px;">02h:52m</div>
<svg style="left:535.30px;top:1063.85px" width="30" height="30" viewBox="0 0 30 30"><circle cx="15" cy="15" r="10.6" fill="none" stroke="#535a68" stroke-width="6.0"/><path d="M16.841 4.561 A10.6 10.6 0 1 1 5.641 10.024" fill="none" stroke="#fcab2b" stroke-width="6.0" stroke-linecap="round"/></svg>
<div id="t94" class="t" style="left:572.50px;top:1068.52px;font-size:21px;line-height:21px;font-weight:normal;color:#e0e1e6;letter-spacing:0.300px;">80% Completed</div>
<div id="t95" class="t" style="left:813.50px;top:1068.52px;font-size:21px;line-height:21px;font-weight:normal;color:#e0e1e6;letter-spacing:-0.509px;">AWS EFS Scan</div>
<div class="r" style="left:1104.8px;top:1078.5px;width:6.5px;height:2.1px;background:#d5d6db;"></div>
<div id="t96" class="t" style="left:1364.00px;top:1068.52px;font-size:21px;line-height:21px;font-weight:normal;color:#e0e1e6;letter-spacing:0.400px;">Message Text</div>
<div id="t97" class="t" style="left:1654.00px;top:1068.52px;font-size:21px;line-height:21px;font-weight:normal;color:#e0e1e6;letter-spacing:0.500px;">Task Text</div></body></html>
